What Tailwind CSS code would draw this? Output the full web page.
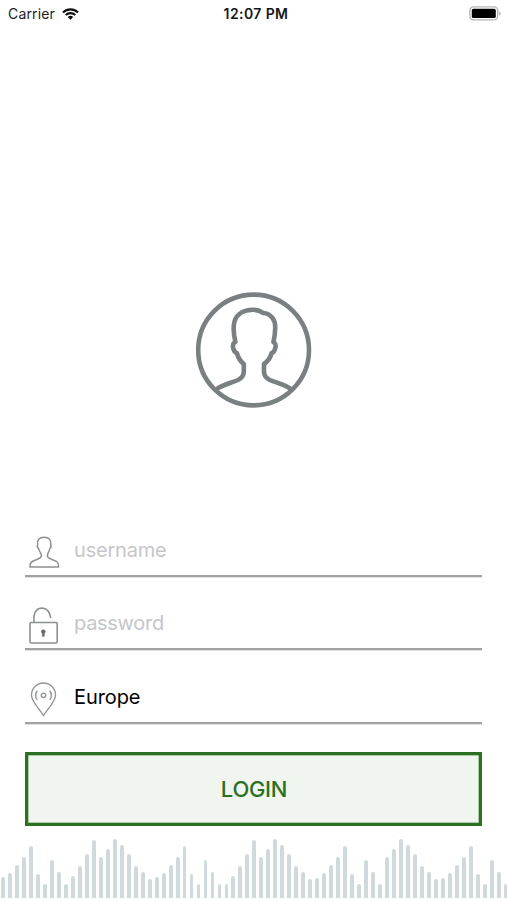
<!DOCTYPE html>
<html lang="en">
<head>
    <meta charset="UTF-8">
    <meta name="viewport" content="width=device-width, initial-scale=1.0">
    <title>Login</title>
    <script src="https://cdn.jsdelivr.net/npm/@tailwindcss/browser@4"></script>
</head>
<body class="bg-white font-['Inter',sans-serif]">
    <main class="flex h-[900px] w-full flex-col overflow-hidden">
        <!-- Status bar -->
        <header class="grid h-[27px] grid-cols-3 items-center pl-2 pr-[6px] text-[14px] text-[#222]">
            <div class="flex items-center gap-[7px]">
                <span class="tracking-[0.15px]">Carrier</span>
                <svg class="h-3 w-[17px]" viewBox="0 0 17 12" fill="none" stroke="#111" stroke-width="2.1">
                    <path d="M1 4.4a10.7 10.7 0 0 1 15 0M3.7 7.1a6.9 6.9 0 0 1 9.6 0"/>
                    <path d="M8.5 11.8 5.8 9.1a3.9 3.9 0 0 1 5.4 0z" fill="#111" stroke="none"/>
                </svg>
            </div>
            <span class="pl-[3px] text-center font-semibold tracking-[0.4px] text-[#161616] whitespace-nowrap">12:07 PM</span>
            <svg class="h-[15px] w-8 justify-self-end" viewBox="0 0 32 15">
                <rect x=".9" y=".9" width="27.8" height="13" rx="3.5" fill="#fff" stroke="#b5b5b5" stroke-width="1.4"/>
                <rect x="2.8" y="2.8" width="24" height="9.3" rx="1.6" fill="#000"/>
                <path d="M30.2 5.5v4q1.4-.5 1.4-2t-1.4-2" fill="#aaa"/>
            </svg>
        </header>

        <!-- Avatar -->
        <div class="mt-[265px] flex justify-center">
            <svg class="h-[116px] w-[116px]" viewBox="0 0 116 116" fill="none" stroke="#7a8081" stroke-width="4.6" stroke-linejoin="round">
                <circle cx="57.6" cy="58" r="55.4"/>
                <path d="M21 97C26 93 35 91 42 88Q47.8 85 47.8 79.5V72C44.5 69.5 42 65 40.8 61C38 60.5 35.5 53.5 38 51L39.4 50C38 44 37 35 38.5 29.5C41 21 49 17.8 57 17.8C61 17.8 64.5 19 67 21C75 21.5 79.6 28 79.2 36Q79 44 77.4 50L78.6 51C81 53.5 78.5 60.5 75.7 61C74.5 65 71.8 69.5 68 72V79.5Q68 85 73.8 88C81 91 90 93 94.8 97"/>
            </svg>
        </div>

        <form class="mt-[117px] px-[25px]">
            <label class="flex h-[52px] items-center border-b-2 border-[#a0a2a3] pl-1 shadow-[0_0.5px_0_#c4c5c6]">
                <svg class="h-8 w-[31px] shrink-0 mt-1" viewBox="0 0 31 32" fill="none" stroke="#8d9091" stroke-width="1.5" stroke-linejoin="round">
                    <path d="M1 31C.8 26.5 2.5 25.5 6.5 24C10.5 22.5 12.4 22 12.4 19.5C12.4 17.5 10 15.5 9.6 12.5C8.3 11.5 8.2 9.5 8.7 8.5C8 3.5 10.5 1.2 15.2 1.2S22.4 3.5 21.7 8.5C22.2 9.5 22.1 11.5 20.8 12.5C20.4 15.5 18.4 17.5 18.4 19.5C18.4 22 20.3 22.5 24.2 24C28.2 25.5 29.8 26.5 29.6 31Z"/>
                </svg>
                <input class="ml-[14px] w-80 text-[20px] tracking-[-0.2px] placeholder:text-[#c5c6c9] outline-none" type="text" name="username" placeholder="username">
            </label>
            <label class="mt-[21px] flex h-[52px] items-center border-b-2 border-[#a0a2a3] pl-1 shadow-[0_0.5px_0_#c4c5c6]">
                <svg class="h-[38px] w-[31px] shrink-0 mt-[5px]" viewBox="0 0 31 38" fill="none" stroke="#8d9091" stroke-width="1.6">
                    <rect x="1" y="15.5" width="27.2" height="20.5" rx="1.2"/>
                    <path d="M5.2 15C3.8 7 6.8 1.5 12.5 1.1C17.5.8 20.7 4.4 21.8 11"/>
                    <path d="M14.3 22.8a1.8 1.8 0 0 1 1.1 3.3l-.2 3.2h-1.8l-.2-3.2a1.8 1.8 0 0 1 1.1-3.3z" fill="#666" stroke="#777" stroke-width=".7"/>
                </svg>
                <input class="ml-[14px] w-80 text-[20px] tracking-[-0.3px] placeholder:text-[#c5c6c9] outline-none" type="password" name="password" placeholder="password">
            </label>
            <label class="mt-[22px] flex h-[52px] items-center border-b-2 border-[#a0a2a3] pl-1 shadow-[0_0.5px_0_#c4c5c6]">
                <svg class="h-[35px] w-[31px] shrink-0 mt-[5px]" viewBox="0 0 31 35" fill="none" stroke="#929596" stroke-width="1.4">
                    <path d="M14.5 33.5C11 27.5 2.5 20 2.5 13a12 12 0 0 1 24 0C26.5 20 18 27.5 14.5 33.5Z"/>
                    <circle cx="14.5" cy="13.3" r="2.2"/>
                    <path d="M8.3 8.7a7.5 7.5 0 0 0 0 9.2M20.7 8.7a7.5 7.5 0 0 1 0 9.2"/>
                </svg>
                <input class="ml-[14px] w-80 text-[20px] tracking-[-0.1px] text-black outline-none" type="text" name="region" value="Europe">
            </label>
            <button class="mt-7 block h-[74px] w-full border-3 border-[#2b7023] bg-[#f0f5ef] pl-px text-[22px] font-medium tracking-[-0.3px] text-[#2b7023] shadow-[inset_0_0_0_0.5px_#6b9d65]" type="button">LOGIN</button>
        </form>

        <!-- Equalizer bars -->
        <div id="wave" class="mt-auto mb-[2px] ml-px flex h-[60px] w-[507px] shrink-0 items-end justify-between"></div>
    </main>

    <script>
        const heights = [
            21, 25, 33, 41, 52, 24, 14, 38, 26, 14, 22, 32, 44, 58, 41, 49, 59, 53, 44, 32, 26, 19, 21, 25,
            33, 41, 52, 24, 14, 38, 26, 14, 14, 22, 32, 44, 58, 41, 49, 59, 53, 44, 32, 26, 19, 20, 25, 33,
            41, 52, 24, 14, 38, 26, 14, 41, 49, 59, 53, 44, 32, 26, 19, 20, 25, 33, 41, 52, 24, 14, 38, 26, 14
        ];
        const wave = document.getElementById('wave');
        heights.forEach(function (h) {
            const bar = document.createElement('div');
            bar.className = 'w-[3.9px] shrink-0 rounded-t-full bg-[#d0dadc]';
            bar.style.height = h + 'px';
            wave.appendChild(bar);
        });
    </script>
</body>
</html>
